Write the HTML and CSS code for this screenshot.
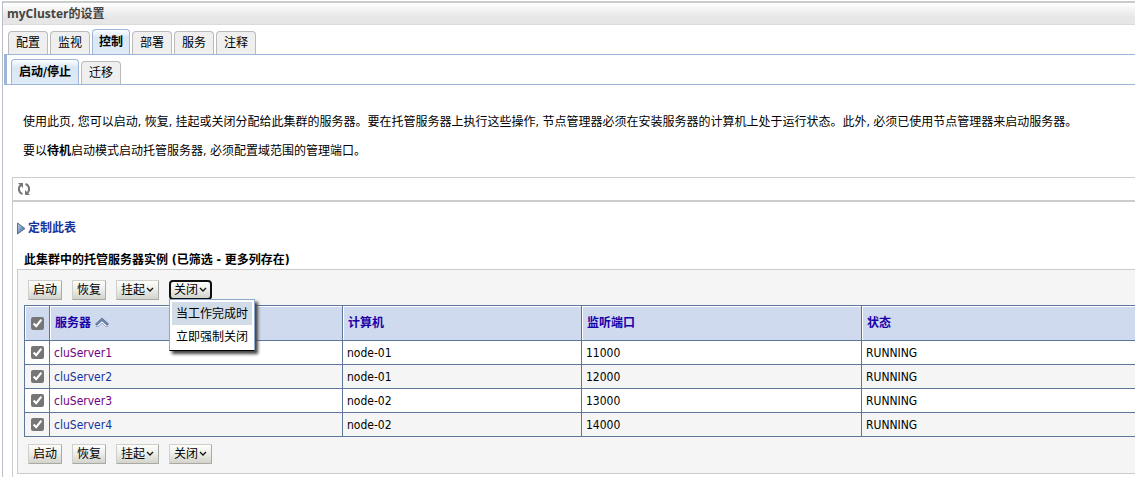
FILE: index.html
```html
<!DOCTYPE html>
<html lang="zh-CN">
<head>
<meta charset="utf-8">
<title>myCluster的设置</title>
<link rel="stylesheet" href="styles.css">
</head>
<body>
<main class="portlet">
  <h1 class="portlet-title">myCluster的设置</h1>
  <nav class="tabs">
    <a class="tab" href="#">配置</a>
    <a class="tab" href="#">监视</a>
    <a class="tab tab-active" href="#">控制</a>
    <a class="tab" href="#">部署</a>
    <a class="tab" href="#">服务</a>
    <a class="tab" href="#">注释</a>
  </nav>
  <nav class="tabs subtabs">
    <a class="tab tab-active" href="#">启动/停止</a>
    <a class="tab" href="#">迁移</a>
  </nav>
  <section class="intro">
    <p>使用此页, 您可以启动, 恢复, 挂起或关闭分配给此集群的服务器。要在托管服务器上执行这些操作, 节点管理器必须在安装服务器的计算机上处于运行状态。此外, 必须已使用节点管理器来启动服务器。</p>
    <p>要以<b>待机</b>启动模式启动托管服务器, 必须配置域范围的管理端口。</p>
  </section>
  <section class="content">
    <div class="toolbar">
      <button class="refresh" type="button" aria-label="刷新">
        <svg width="14" height="14" viewBox="0 0 14 14" fill="none" stroke="#777" stroke-width="2">
          <path d="M5.500 12C1 10.500 1 5 4 3"/>
          <path d="M8.500 2C13 3.500 13 9 10 11"/>
          <path d="M1 1h5v5zM13 13H8V8z" fill="#777" stroke="none"/>
        </svg>
      </button>
    </div>
    <div class="body">
      <a class="customize" href="#">
        <svg width="9" height="13" viewBox="0 0 9 13">
          <defs><linearGradient id="arrow" x1="0" y1="0" x2="1" y2="1"><stop offset="0" stop-color="#c5d8f0"/><stop offset="1" stop-color="#33568f"/></linearGradient></defs>
          <path d="M.5 1v11L8 6.500z" fill="url(#arrow)" stroke="#54719f"/>
        </svg>
        定制此表
      </a>
      <h2 class="caption">此集群中的托管服务器实例 (已筛选 - 更多列存在)</h2>
      <div class="panel">
        <div class="buttons">
          <button class="btn" type="button">启动</button>
          <button class="btn" type="button">恢复</button>
          <button class="btn" type="button">挂起<svg width="8" height="6" viewBox="0 0 8 6"><path d="M1 1l3 3 3-3" fill="none" stroke="#111" stroke-width="1.300"/></svg></button>
          <div class="dropdown">
            <button class="btn btn-open" type="button">关闭<svg width="8" height="6" viewBox="0 0 8 6"><path d="M1 1l3 3 3-3" fill="none" stroke="#111" stroke-width="1.300"/></svg></button>
            <div class="menu">
              <a class="menu-item menu-item-hover" href="#">当工作完成时</a>
              <a class="menu-item" href="#">立即强制关闭</a>
            </div>
          </div>
        </div>
        <table class="grid">
          <colgroup><col class="col-check"><col class="col-server"><col class="col-machine"><col class="col-port"><col></colgroup>
          <thead>
            <tr>
              <th><input type="checkbox" checked aria-label="全选"></th>
              <th><a href="#">服务器</a><svg class="sort" width="14" height="11" viewBox="0 0 14 11"><path d="M3.500 9.500L7 6l3.500 3.500H13L7 3.500 1 9.500z" fill="#f4f7fc" stroke="#8299bd" stroke-width=".8"/><path d="M.5 7L7 1l6.500 6L12 8 7 3.500 2 8z" fill="#7189b0" stroke="#38527f" stroke-width=".6"/></svg></th>
              <th><a href="#">计算机</a></th>
              <th><a href="#">监听端口</a></th>
              <th><a href="#">状态</a></th>
            </tr>
          </thead>
          <tbody>
            <tr><td><input type="checkbox" checked aria-label="cluServer1"></td><td><a class="visited" href="#">cluServer1</a></td><td>node-01</td><td>11000</td><td>RUNNING</td></tr>
            <tr><td><input type="checkbox" checked aria-label="cluServer2"></td><td><a href="#">cluServer2</a></td><td>node-01</td><td>12000</td><td>RUNNING</td></tr>
            <tr><td><input type="checkbox" checked aria-label="cluServer3"></td><td><a class="visited" href="#">cluServer3</a></td><td>node-02</td><td>13000</td><td>RUNNING</td></tr>
            <tr><td><input type="checkbox" checked aria-label="cluServer4"></td><td><a href="#">cluServer4</a></td><td>node-02</td><td>14000</td><td>RUNNING</td></tr>
          </tbody>
        </table>
        <div class="buttons">
          <button class="btn" type="button">启动</button>
          <button class="btn" type="button">恢复</button>
          <button class="btn" type="button">挂起<svg width="8" height="6" viewBox="0 0 8 6"><path d="M1 1l3 3 3-3" fill="none" stroke="#111" stroke-width="1.300"/></svg></button>
          <button class="btn" type="button">关闭<svg width="8" height="6" viewBox="0 0 8 6"><path d="M1 1l3 3 3-3" fill="none" stroke="#111" stroke-width="1.300"/></svg></button>
        </div>
      </div>
    </div>
  </section>
</main>
</body>
</html>
```
FILE: styles.css
```css
* { box-sizing: border-box; }

body {
  margin: 0;
  padding: 1px 0 0 2px;
  background: #fff;
  color: #000;
  font: 12px/18px Tahoma, "DejaVu Sans Condensed", "Noto Sans CJK SC", sans-serif;
  overflow-x: hidden;
}

a { color: #16349b; text-decoration: none; }

.portlet {
  min-height: calc(100vh - 1px);
  border-left: 1px solid #b8bfc8;
}

.portlet-title {
  margin: 0 0 4px;
  padding: 2px 4px 1px;
  border-top: 2px solid #c9cccb;
  border-bottom: 1px solid #dcdcdc;
  background: linear-gradient(#fff, #e6e6e6 70%);
  color: #444;
  font-family: "Open Sans", "Noto Sans CJK SC", sans-serif;
  font-size: 12px;
  line-height: 18px;
  font-weight: bold;
}

.tabs {
  display: flex;
  align-items: flex-end;
  gap: 2px;
  margin-left: 1px;
  padding-left: 4px;
  height: 26px;
  border-bottom: 1px solid #9cb5d8;
}

.subtabs {
  height: 30px;
  border-left: 3px solid #9cb5d8;
}

.tab {
  padding: 2px 7px;
  height: 23px;
  border: 1px solid #bbb;
  border-bottom: 0;
  border-radius: 4px 4px 0 0;
  background: #efefef;
  color: #000;
}

.tab-active {
  padding: 3px 6px;
  height: 25px;
  border-color: #9cb5d8;
  background: linear-gradient(#fff, #d9e7f5 30%, #dfebf7);
  font-weight: bold;
}

.subtabs .tab-active { padding: 3px 7px; }

.intro { padding: 28px 20px 17px; }
.intro p { margin: 0 0 11px; }
.intro p:last-child { margin: 0; }

.content {
  margin-left: 9px;
  border: 1px solid #ccc;
  border-width: 1px 0 0 1px;
}

.toolbar {
  display: flex;
  align-items: center;
  height: 24px;
  padding-left: 4px;
  border-bottom: 2px solid #ccc;
}

.refresh {
  display: flex;
  padding: 0;
  border: 0;
  background: none;
}

.body { padding: 17px 0 4px 4px; }

.customize {
  display: flex;
  align-items: center;
  gap: 2px;
  font-weight: bold;
}

.caption {
  margin: 14px 0 0 7px;
  font-size: 12px;
  line-height: 18px;
  font-weight: bold;
}

.panel {
  padding-left: 6px;
  border: 1px solid #ccc;
  border-right: 0;
  background: #f5f5f5;
}

.buttons {
  display: flex;
  gap: 10px;
  padding: 10px 0 5px 4px;
}

.buttons:last-child { padding: 7px 0 9px 4px; }

.btn {
  display: flex;
  align-items: center;
  gap: 1px;
  height: 20px;
  padding: 0 4px;
  border: 1px solid #bcbcb8;
  border-color: #cfcfcb #a9a9a5 #a9a9a5 #cfcfcb;
  border-radius: 1px;
  background: linear-gradient(#fdfdfb, #ecece8 50%, #d3d3cc);
  color: #000;
  font: inherit;
}

.btn-open {
  border: 2px solid #101010;
  border-radius: 4px;
  padding: 0 3px;
}

.dropdown { position: relative; }

.menu {
  position: absolute;
  z-index: 1;
  top: calc(100% - 1px);
  left: 0;
  padding: 2px;
  border: 1px solid #8fa9cc;
  border-bottom-color: #000;
  background: #fff;
  box-shadow: 3px 3px 3px #444;
  white-space: nowrap;
}

.menu-item {
  display: block;
  padding: 3px 4px 2px;
  color: #000;
}

.menu-item-hover { background: #d1dce8; }

.grid {
  width: 100%;
  table-layout: fixed;
  border-collapse: separate;
  border-spacing: 0;
  border: 1px solid #5d7699;
  border-width: 1px 0 0 1px;
}

.col-check { width: 25px; }
.col-server { width: 293px; }
.col-machine { width: 239px; }
.col-port { width: 280px; }

.grid th, .grid td {
  height: 24px;
  padding: 0 4px;
  border: 1px solid #5d7699;
  border-width: 0 1px 1px 0;
  background: #fff;
  line-height: 18px;
  text-align: left;
}

.grid th:last-child, .grid td:last-child { border-right: 0; }

.grid th {
  height: 35px;
  padding-left: 5px;
  background: #d0daee;
  box-shadow: inset 1px 1px #fff;
}

.grid th a { color: #1b00a8; }
.grid tbody tr:nth-child(even) td { background: #f5f5f5; }
.grid .visited { color: #700082; }

.grid input {
  display: block;
  width: 13px;
  height: 13px;
  margin: 0 auto;
  accent-color: #767676;
}

.sort { margin-left: 4px; vertical-align: -1px; }
```
